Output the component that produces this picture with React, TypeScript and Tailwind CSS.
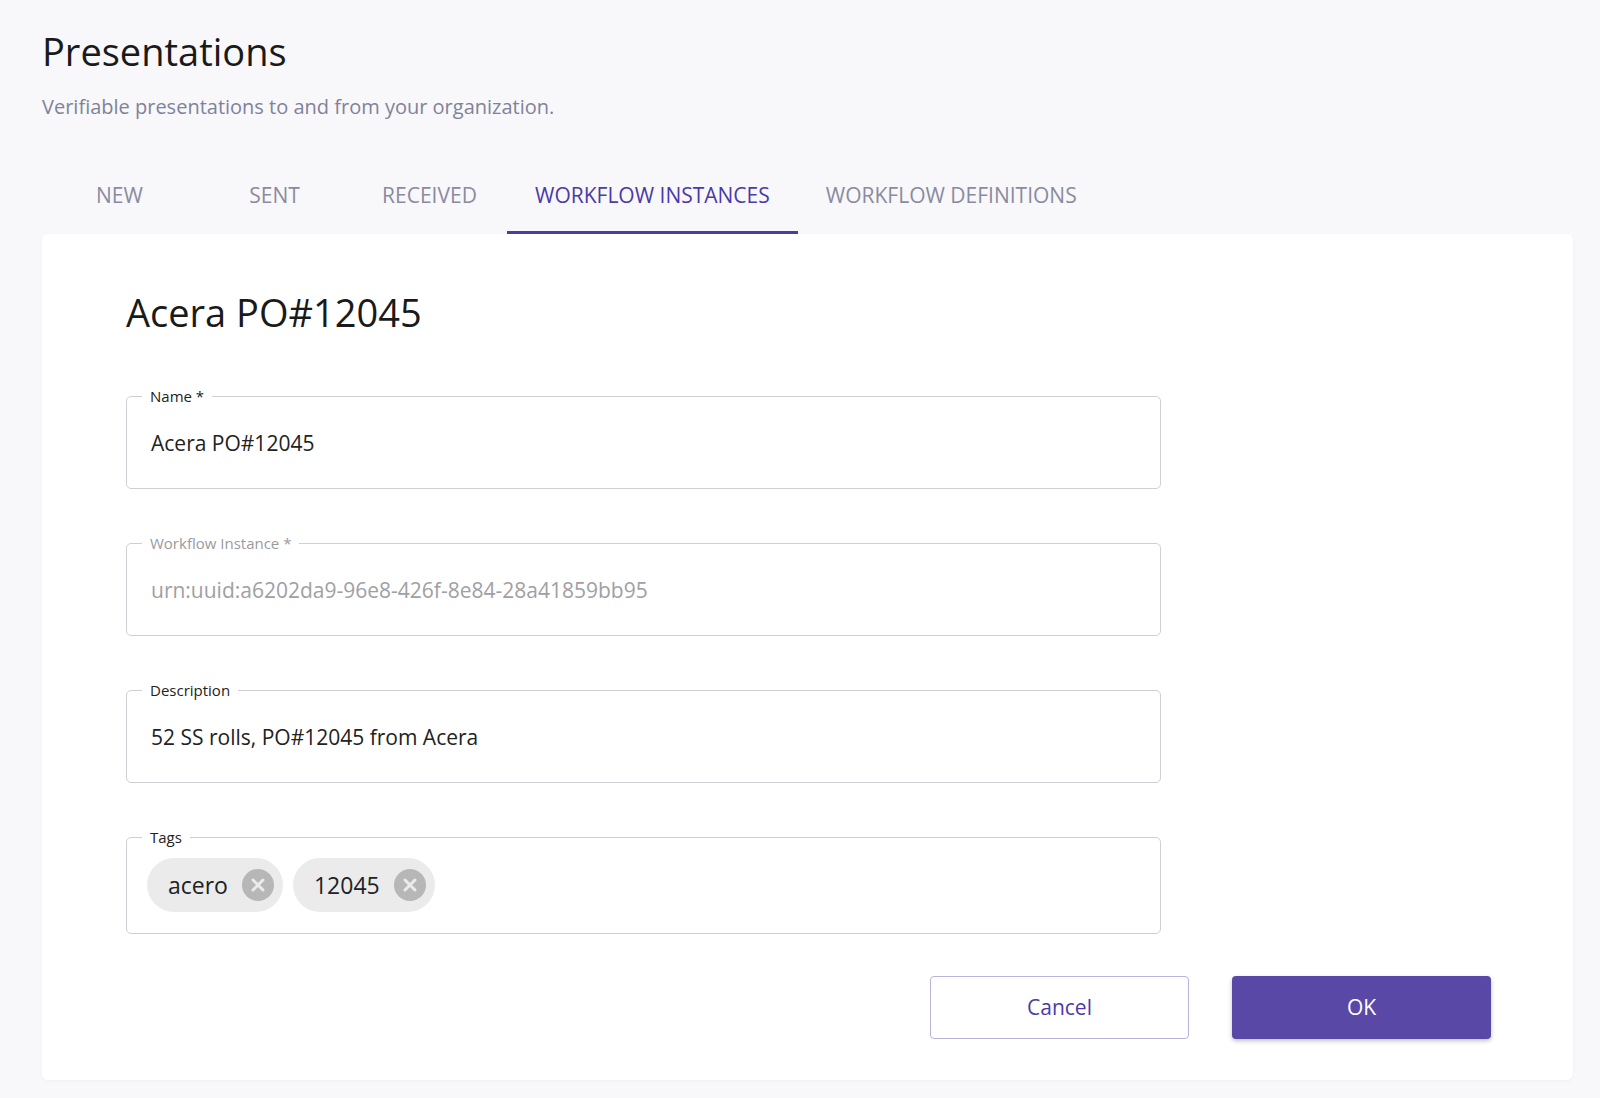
import type { ReactNode } from "react";

const font = { fontFamily: "'Open Sans', 'Noto Sans', sans-serif" };

function Field({ label, children, muted }: { label: string; children: ReactNode; muted?: boolean }) {
  return (
    <fieldset className="-mt-[9px] h-[102px] w-[1035px] rounded-[5px] border border-[#cfcfd4] px-[24px]">
      <legend className={`ml-[-9px] px-[8px] text-[15px] leading-[18px] ${muted ? "text-[#9a9a9f]" : "text-[#222]"}`}>{label}</legend>
      {children}
    </fieldset>
  );
}

function Chip({ text }: { text: string }) {
  return (
    <div className="flex h-[54px] items-center gap-[14px] rounded-full bg-[#ebebeb] pl-[21px] pr-[9px] text-[23px] text-[#222]">
      {text}
      <span className="flex h-[32px] w-[32px] items-center justify-center rounded-full bg-[#b7b7b7]">
        <svg width="14" height="14" viewBox="0 0 14 14"><path d="M2 2L12 12M12 2L2 12" stroke="#ebebeb" strokeWidth="3" strokeLinecap="round" /></svg>
      </span>
    </div>
  );
}

export default function App() {
  const tabs = ["NEW", "SENT", "RECEIVED", "WORKFLOW INSTANCES", "WORKFLOW DEFINITIONS"];
  return (
    <div style={font} className="min-h-[1098px] w-[1600px] bg-[#f8f8fa] pl-[42px] pt-[25px]">
      <h1 className="text-[38px] leading-[52px] text-[#1a1a1a]">Presentations</h1>
      <p className="mt-[15px] text-[20px] text-[#80829a]">Verifiable presentations to and from your organization.</p>
      <div className="mt-[36px] flex h-[76px]">
        {tabs.map((t) => {
          const active = t === "WORKFLOW INSTANCES";
          return (
            <div key={t} className={`flex min-w-[155px] items-center justify-center px-[28px] text-[21px] ${active ? "border-b-[3px] border-[#4b3aa8] pt-[3px] text-[#4b3aa8]" : "text-[#8a8ba0]"}`}>
              {t}
            </div>
          );
        })}
      </div>
      <div className="flex w-[1531px] flex-col rounded-[6px] bg-white pb-[41px] pl-[84px] pr-[82px] pt-[52px] shadow-[0_1px_3px_rgba(0,0,0,0.04)]">
        <h2 className="text-[38px] leading-[52px] text-[#1a1a1a]">Acera PO#12045</h2>
        <div className="mt-[58px] flex flex-col gap-[54px]">
          <Field label="Name *"><div className="pt-[23px] text-[21px] text-[#222]">Acera PO#12045</div></Field>
          <Field label="Workflow Instance *" muted><div className="pt-[23px] text-[21px] text-[#a0a0a4]">urn:uuid:a6202da9-96e8-426f-8e84-28a41859bb95</div></Field>
          <Field label="Description"><div className="pt-[23px] text-[21px] text-[#222]">52 SS rolls, PO#12045 from Acera</div></Field>
          <fieldset className="-mt-[9px] h-[106px] w-[1035px] rounded-[5px] border border-[#cfcfd4] px-[20px]">
            <legend className="ml-[-5px] px-[8px] text-[15px] leading-[18px] text-[#222]">Tags</legend>
            <div className="flex gap-[10px] pt-[12px]"><Chip text="acero" /><Chip text="12045" /></div>
          </fieldset>
        </div>
        <div className="mt-[42px] flex justify-end gap-[43px]">
          <button className="h-[63px] w-[259px] rounded-[4px] border border-[#b9b3dc] text-[21px] text-[#4b3aa8]">Cancel</button>
          <button className="h-[63px] w-[259px] rounded-[4px] bg-[#5a48a6] text-[21px] text-white shadow-[0_2px_4px_rgba(0,0,0,0.25)]">OK</button>
        </div>
      </div>
    </div>
  );
}
